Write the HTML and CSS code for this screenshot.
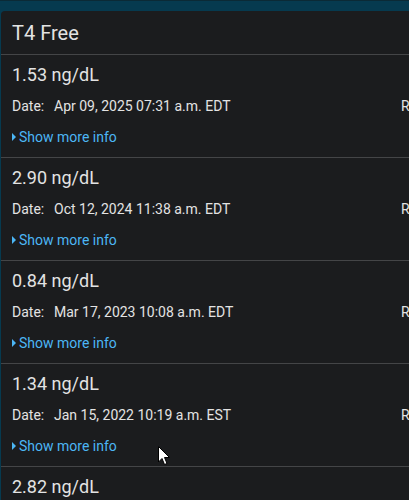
FILE: index.html
```html
<!DOCTYPE html>
<html>
<head>
<meta charset="utf-8">
<link rel="stylesheet" href="styles.css">
</head>
<body>
<div class="topbar"></div>
<div class="card">
  <div class="card-title">T4 Free</div>
  <div class="entry">
    <div class="value">1.53 ng/dL</div>
    <div class="meta"><div class="date"><span class="label">Date:</span><span>Apr 09, 2025 07:31 a.m. EDT</span></div><div class="ref">Reference range:</div></div>
    <div class="more"><span class="tri"></span>Show more info</div>
  </div>
  <div class="entry">
    <div class="value">2.90 ng/dL</div>
    <div class="meta"><div class="date"><span class="label">Date:</span><span>Oct 12, 2024 11:38 a.m. EDT</span></div><div class="ref">Reference range:</div></div>
    <div class="more"><span class="tri"></span>Show more info</div>
  </div>
  <div class="entry">
    <div class="value">0.84 ng/dL</div>
    <div class="meta"><div class="date"><span class="label">Date:</span><span>Mar 17, 2023 10:08 a.m. EDT</span></div><div class="ref">Reference range:</div></div>
    <div class="more"><span class="tri"></span>Show more info</div>
  </div>
  <div class="entry">
    <div class="value">1.34 ng/dL</div>
    <div class="meta"><div class="date"><span class="label">Date:</span><span>Jan 15, 2022 10:19 a.m. EST</span></div><div class="ref">Reference range:</div></div>
    <div class="more"><span class="tri"></span>Show more info</div>
  </div>
  <div class="entry">
    <div class="value">2.82 ng/dL</div>
    <div class="meta"><div class="date"><span class="label">Date:</span><span>Nov 03, 2021 09:12 a.m. EDT</span></div><div class="ref">Reference range:</div></div>
    <div class="more"><span class="tri"></span>Show more info</div>
  </div>
</div>
<svg class="cursor" width="13" height="20" viewBox="0 0 13 20"><path d="M0.5 0.5 L0.5 16 L4 12.5 L6.5 18.5 L9 17.5 L6.5 11.5 L11.5 11.5 Z" fill="#fff" stroke="#000" stroke-width="1"/></svg>
</body>
</html>
```
FILE: styles.css
```css
html, body {
  margin: 0;
  padding: 0;
  background: #063a4f;
  height: 500px;
  overflow: hidden;
}
body {
  font-family: Roboto, "Liberation Sans", sans-serif;
  color: #e3e3e3;
  border-top: 1px solid #0b2a36;
  position: relative;
}
.topbar {
  height: 10px;
}
.card {
  margin-left: 1px;
  background: #1b1c1e;
  border-top-left-radius: 4px;
  overflow: hidden;
  min-height: 600px;
}
.card-title {
  font-size: 20px;
  line-height: 24px;
  padding: 10px 11px 9px;
  border-bottom: 1px solid #444547;
}
.entry {
  padding: 9px 0 11px 11px;
  border-bottom: 1px solid #444547;
}
.value {
  font-size: 18px;
  line-height: 22px;
}
.meta {
  display: flex;
  margin-top: 11px;
  font-size: 14px;
  line-height: 18px;
  white-space: nowrap;
}
.date {
  width: 389px;
  flex: none;
  display: flex;
}
.label {
  width: 42px;
}
.ref {
  flex: none;
}
.more {
  margin-top: 13px;
  font-size: 14px;
  line-height: 18px;
  color: #4cb6f5;
  display: flex;
  align-items: center;
}
.tri {
  width: 0;
  height: 0;
  border-top: 4px solid transparent;
  border-bottom: 4px solid transparent;
  border-left: 4px solid #4cb6f5;
  margin-right: 3px;
}
.cursor {
  position: absolute;
  left: 158px;
  top: 445px;
}
```
